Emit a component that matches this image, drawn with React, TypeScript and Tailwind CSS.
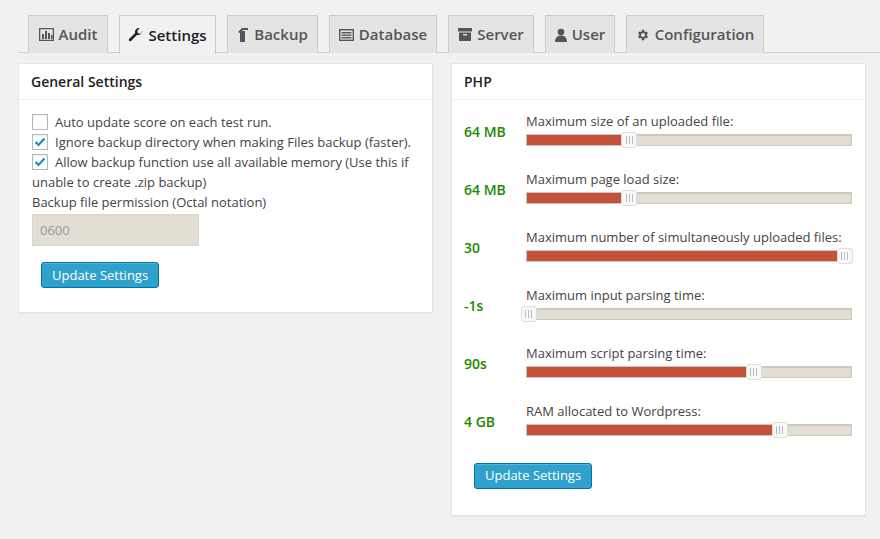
import React from "react";

const tabs = [
  { n: "Audit", w: "w-[80px]", icon: (
    <svg width="15" height="13" viewBox="0 0 15 13"><rect x="0.5" y="0.5" width="14" height="12" fill="none" stroke="#555" strokeWidth="1.5"/><rect x="3" y="6" width="2" height="5" fill="#555"/><rect x="6" y="3" width="2" height="8" fill="#555"/><rect x="9" y="5" width="2" height="6" fill="#555"/><rect x="12" y="7" width="1.5" height="4" fill="#555"/></svg>) },
  { n: "Settings", w: "w-[97px]", active: true, icon: (
    <svg width="15" height="15" viewBox="0 0 16 16"><path d="M15 3.5a4 4 0 0 1-5.3 3.8L3.2 13.8a1.5 1.5 0 0 1-2.1-2.1l6.5-6.5A4 4 0 0 1 12.5 0.2L10 2.7l.5 2.8 2.8.5 2.5-2.5z" fill="#222"/></svg>) },
  { n: "Backup", w: "w-[91px]", icon: (
    <svg width="12" height="15" viewBox="0 0 12 15"><rect x="3" y="4" width="5" height="11" fill="#555"/><path d="M1 5 L5 1 H11 V3 H6 L3 6Z" fill="#555"/></svg>) },
  { n: "Database", w: "w-[108px]", icon: (
    <svg width="15" height="12" viewBox="0 0 15 12"><rect x="0.7" y="0.7" width="13.6" height="10.6" fill="none" stroke="#555" strokeWidth="1.4"/><rect x="2.5" y="3" width="10" height="1.4" fill="#555"/><rect x="2.5" y="5.5" width="10" height="1.4" fill="#555"/><rect x="2.5" y="8" width="10" height="1.4" fill="#555"/></svg>) },
  { n: "Server", w: "w-[86px]", icon: (
    <svg width="14" height="13" viewBox="0 0 14 13"><rect x="0" y="0" width="14" height="3.5" fill="#555"/><path d="M1 4.5h12V13H1z" fill="#555"/><rect x="5" y="6" width="4" height="1.5" fill="#ddd"/></svg>) },
  { n: "User", w: "w-[70px]", icon: (
    <svg width="12" height="14" viewBox="0 0 12 14"><circle cx="6" cy="4" r="3.3" fill="#555"/><path d="M0 14c0-4 2-6.5 6-6.5s6 2.5 6 6.5z" fill="#555"/></svg>) },
  { n: "Configuration", w: "w-[138px]", icon: (
    <svg width="14" height="14" viewBox="0 0 24 24"><path fill="#555" d="M19.4 13a7.5 7.5 0 0 0 0-2l2.1-1.6-2-3.5-2.5 1a7 7 0 0 0-1.7-1L15 3h-4l-.4 2.9a7 7 0 0 0-1.7 1l-2.5-1-2 3.5L6.6 11a7.5 7.5 0 0 0 0 2l-2.1 1.6 2 3.5 2.5-1a7 7 0 0 0 1.7 1L11 21h4l.4-2.9a7 7 0 0 0 1.7-1l2.5 1 2-3.5zM13 15.5a3.5 3.5 0 1 1 0-7 3.5 3.5 0 0 1 0 7z" transform="translate(-1 0)"/></svg>) },
];

const rows = [
  { v: "64 MB", l: "Maximum size of an uploaded file:", p: 31.6 },
  { v: "64 MB", l: "Maximum page load size:", p: 31.6 },
  { v: "30", l: "Maximum number of simultaneously uploaded files:", p: 98 },
  { v: "-1s", l: "Maximum input parsing time:", p: 0.6 },
  { v: "90s", l: "Maximum script parsing time:", p: 70 },
  { v: "4 GB", l: "RAM allocated to Wordpress:", p: 78 },
];

function Check({ on }: { on?: boolean }) {
  return (
    <span className="w-4 h-4 border border-[#b4b9be] bg-white shadow-[inset_0_1px_2px_rgba(0,0,0,0.07)] flex items-center justify-center shrink-0">
      {on && <svg width="12" height="10" viewBox="0 0 12 10"><path d="M1.5 5l3 3 6-6.5" fill="none" stroke="#1e8cbe" strokeWidth="2.2"/></svg>}
    </span>
  );
}

function Button() {
  return (
    <button className="h-[26px] px-[10px] bg-[#2ea2cc] border border-[#0074a2] rounded-[3px] text-white text-[13px] shadow-[inset_0_1px_0_rgba(120,200,230,0.5)]">Update Settings</button>
  );
}

export default function App() {
  return (
    <div className="w-[880px] h-[539px] bg-[#f1f1f1] overflow-hidden text-[#444]" style={{ fontFamily: '"Open Sans", sans-serif' }}>
      <div className="ml-[18px] pt-[15px] pl-[10px] flex gap-[11px] border-b border-[#ccc] h-[53px]">
        {tabs.map((t) => (
          <div key={t.n} className={`${t.w} h-[38px] flex items-center justify-center gap-[5px] border border-[#ccc] border-b-0 text-[15px] font-semibold ${t.active ? "bg-[#f1f1f1] text-[#222] h-[39px] relative z-10" : "bg-[#e4e4e4] text-[#555]"}`}>
            {t.icon}
            <span>{t.n}</span>
          </div>
        ))}
      </div>
      <div className="flex pl-[18px] pt-[10px] gap-[18px] items-start">
        <div className="w-[415px] bg-white border border-[#e5e5e5] shadow-[0_1px_1px_rgba(0,0,0,0.04)]">
          <div className="h-[36px] border-b border-[#eee] px-[12px] flex items-center text-[14px] font-semibold text-[#222]">General Settings</div>
          <div className="px-[13px] pt-[12px] pb-[24px] text-[13px] leading-[20px] text-[#444]">
            <div className="flex items-center gap-[7px]"><Check /><span>Auto update score on each test run.</span></div>
            <div className="flex items-center gap-[7px]"><Check on /><span>Ignore backup directory when making Files backup (faster).</span></div>
            <div><span className="inline-flex align-middle mr-[7px] -mt-[3px]"><Check on /></span>Allow backup function use all available memory (Use this if unable to create .zip backup)</div>
            <div>Backup file permission (Octal notation)</div>
            <div className="mt-[2px] w-[167px] h-[32px] bg-[#e2ded4] border border-[#d8d5cc] flex items-center px-[7px] text-[#999]">0600</div>
            <div className="mt-[16px] ml-[9px]"><Button /></div>
          </div>
        </div>
        <div className="w-[415px] bg-white border border-[#e5e5e5] shadow-[0_1px_1px_rgba(0,0,0,0.04)]">
          <div className="h-[36px] border-b border-[#eee] px-[12px] flex items-center text-[14px] font-semibold text-[#222]">PHP</div>
          <div className="px-[12px] pt-[12px] pb-[26px]">
            {rows.map((r, i) => (
              <div key={i} className="flex h-[58px]">
                <div className="w-[62px] pt-[9px] text-[14px] font-semibold text-[#228b00]">{r.v}</div>
                <div className="flex-1 pr-[1px]">
                  <div className="text-[13px] leading-[18px] text-[#444]">{r.l}</div>
                  <div className="relative mt-[4px] h-[12px] bg-[#e2ded4] border border-[#ccc7bb] shadow-[inset_0_1px_1px_rgba(0,0,0,0.1)]">
                    <div className="absolute left-0 top-0 bottom-0 bg-[#c4513a]" style={{ width: `${r.p}%` }} />
                    <div className="absolute top-[-3px] w-[16px] h-[16px] bg-[#f8f8f8] border border-[#ddd] rounded-[3px] flex items-center justify-center gap-[2px]" style={{ left: `calc(${r.p}% - 8px)` }}>
                      <span className="w-px h-[8px] bg-[#bbb]" /><span className="w-px h-[8px] bg-[#bbb]" /><span className="w-px h-[8px] bg-[#bbb]" />
                    </div>
                  </div>
                </div>
              </div>
            ))}
            <div className="ml-[10px] mt-[2px]"><Button /></div>
          </div>
        </div>
      </div>
    </div>
  );
}
